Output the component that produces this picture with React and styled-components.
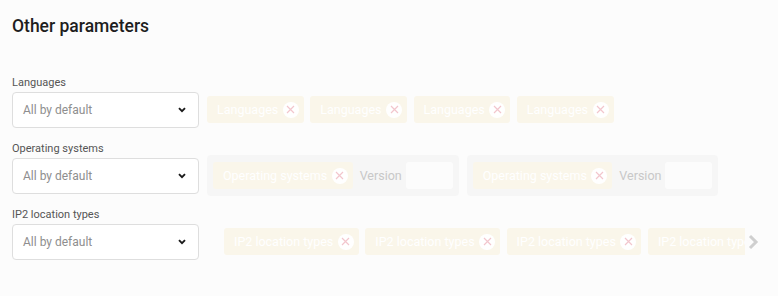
import React from "react";
import styled, { createGlobalStyle } from "styled-components";

const Global = createGlobalStyle`
  html, body { margin: 0; padding: 0; background: #fcfcfc; }
  body { font-family: Roboto, "Liberation Sans", sans-serif; }
  * { box-sizing: border-box; }
`;

const Page = styled.div`
  padding: 14px 12px 0 12px;
  width: 778px;
  height: 296px;
  overflow: hidden;
  background: #fcfcfc;
`;

const Title = styled.h2`
  margin: 0 0 38px 0;
  font-size: 17.5px;
  line-height: 24px;
  font-weight: 500;
  color: #1e1e1e;
`;

const Rows = styled.div`
  display: flex;
  flex-direction: column;
  gap: 14.5px;
`;

const Field = styled.div`
  display: flex;
  flex-direction: column;
  gap: 2px;
`;

const Label = styled.div`
  font-size: 11px;
  line-height: 14px;
  color: #555;
`;

const Line = styled.div`
  display: flex;
  align-items: center;
  gap: 8px;
  height: 35.5px;
  min-width: 0;
`;

const Select = styled.div`
  flex: 0 0 auto;
  width: 187px;
  height: 35.5px;
  border: 1px solid #dedede;
  border-radius: 4px;
  background: #fff;
  display: flex;
  align-items: center;
  justify-content: space-between;
  padding: 0 12px 0 10px;
  font-size: 12px;
  color: #8e8e8e;
`;

const Chips = styled.div`
  display: flex;
  align-items: center;
  gap: 6.5px;
  padding-left: ${(p) => p.$indent || 0}px;
  min-width: 0;
  overflow: hidden;
  flex: ${(p) => (p.$fill ? "0 1 538px" : "0 0 auto")};
`;

const Chip = styled.div`
  flex: 0 0 auto;
  display: flex;
  align-items: center;
  gap: 4.5px;
  height: 27px;
  padding: 0 5px 0 10px;
  border-radius: 3px;
  background: #faf6ea;
  color: #ffffff;
  font-size: 12.5px;
  white-space: nowrap;
`;

const Close = styled.span`
  flex: 0 0 auto;
  width: 16px;
  height: 16px;
  border-radius: 50%;
  background: #ffffff;
  display: flex;
  align-items: center;
  justify-content: center;
`;

const Group = styled.div`
  flex: 0 0 auto;
  display: flex;
  align-items: center;
  gap: 7px;
  padding: 7px 6px;
  border-radius: 4px;
  background: #f6f6f6;
`;

const Version = styled.span`
  font-size: 12.5px;
  color: #c8c8c8;
  margin-right: -3px;
`;

const VersionInput = styled.div`
  width: 47px;
  height: 27px;
  border-radius: 3px;
  background: #fcfcfc;
`;

const Arrow = styled.span`
  flex: 0 0 auto;
  display: flex;
  align-items: center;
  margin-left: -5px;
`;

const ChevronDown = () => (
  <svg width="8" height="6" viewBox="0 0 8 6">
    <path d="M1 1.2 L4 4.2 L7 1.2" fill="none" stroke="#1a1a1a" strokeWidth="1.9" />
  </svg>
);

const X = () => (
  <svg width="9" height="9" viewBox="0 0 9 9">
    <path d="M1 1 L8 8 M8 1 L1 8" stroke="#f2c6cd" strokeWidth="1.2" />
  </svg>
);

const Tag = ({ children }) => (
  <Chip>
    {children}
    <Close>
      <X />
    </Close>
  </Chip>
);

const Dropdown = () => (
  <Select>
    All by default
    <ChevronDown />
  </Select>
);

const OsGroup = () => (
  <Group>
    <Tag>Operating systems</Tag>
    <Version>Version</Version>
    <VersionInput />
  </Group>
);

export default function App() {
  return (
    <Page>
      <Global />
      <Title>Other parameters</Title>
      <Rows>
        <Field>
          <Label>Languages</Label>
          <Line>
            <Dropdown />
            <Chips>
              {[0, 1, 2, 3].map((i) => (
                <Tag key={i}>Languages</Tag>
              ))}
            </Chips>
          </Line>
        </Field>
        <Field>
          <Label>Operating systems</Label>
          <Line>
            <Dropdown />
            <OsGroup />
            <OsGroup />
          </Line>
        </Field>
        <Field>
          <Label>IP2 location types</Label>
          <Line>
            <Dropdown />
            <Chips $fill $indent={17}>
              {[0, 1, 2, 3].map((i) => (
                <Tag key={i}>IP2 location types</Tag>
              ))}
            </Chips>
            <Arrow>
              <svg width="11" height="16" viewBox="0 0 11 16">
                <path d="M2 2 L8 8 L2 14" fill="none" stroke="#cfcfcf" strokeWidth="3" />
              </svg>
            </Arrow>
          </Line>
        </Field>
      </Rows>
    </Page>
  );
}
